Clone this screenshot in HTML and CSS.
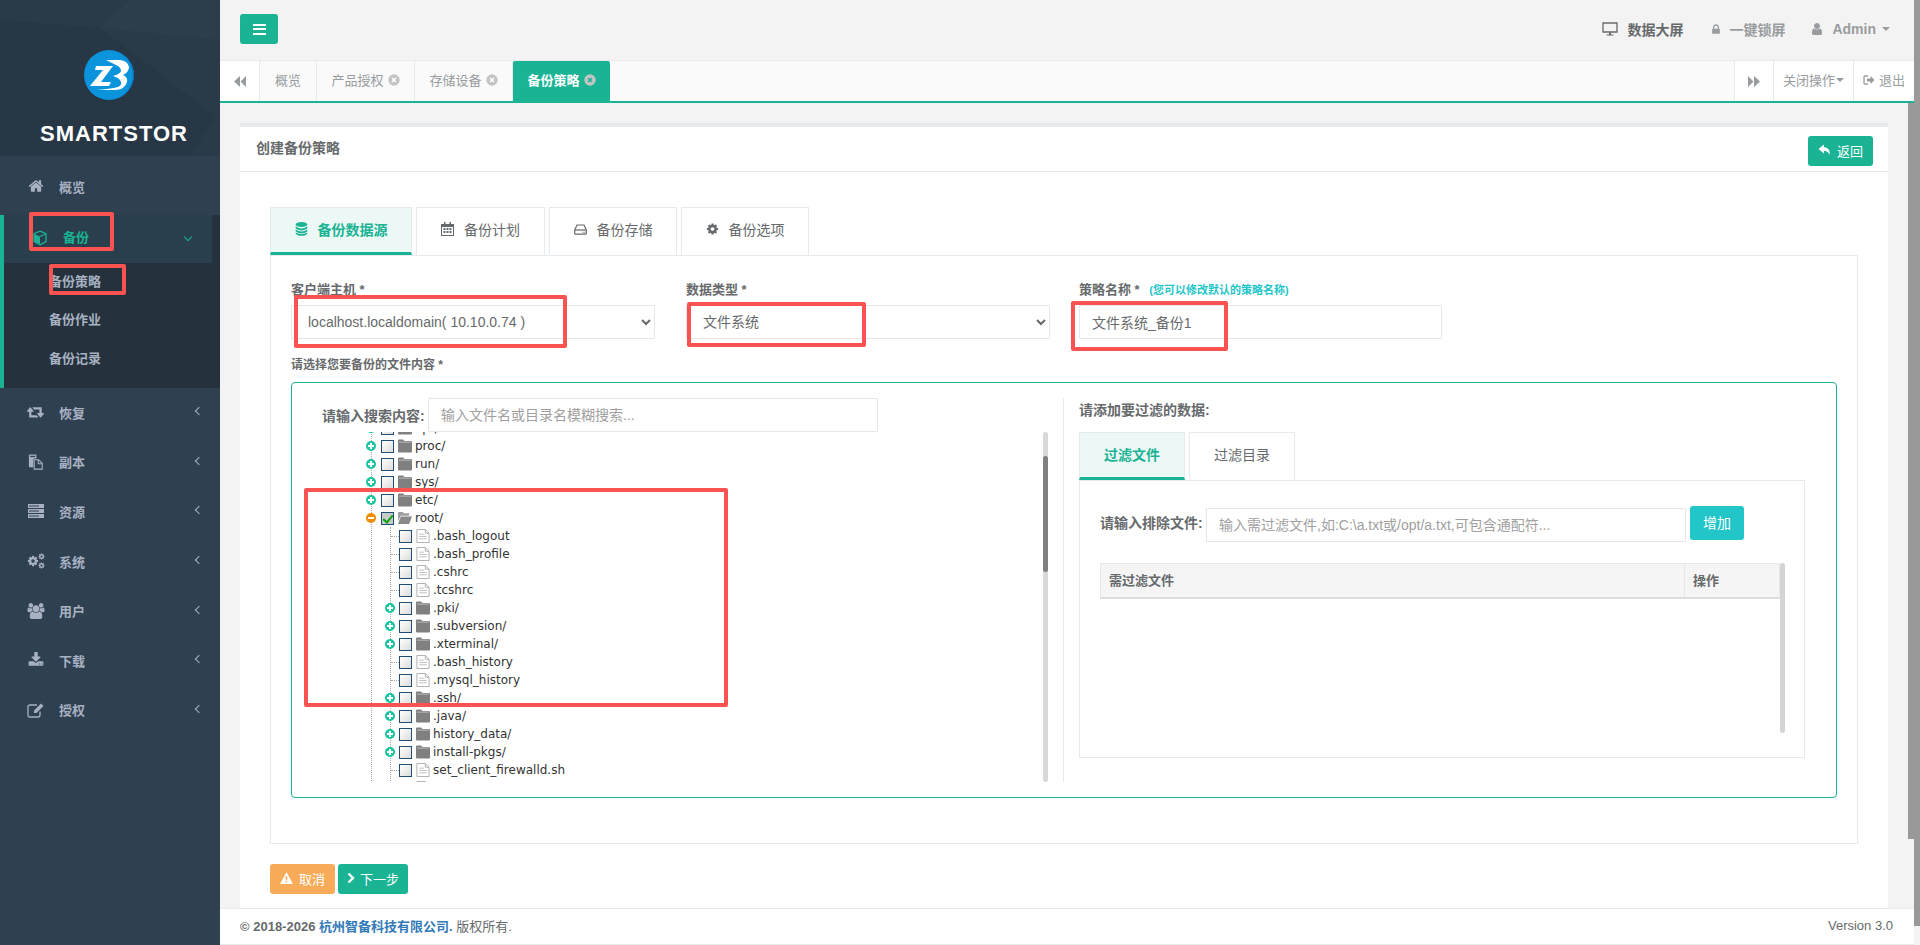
FILE: index.html
```html
<!DOCTYPE html>
<html lang="en">

<head>
    <meta charset="UTF-8">
    <title>SMARTSTOR</title>
    <link rel="stylesheet" href="styles.css">
</head>

<body>
    <!-- Icon sprite -->
    <svg class="sprite">
        <symbol id="i-home" viewBox="0 0 1792 1792"><path d="M1472 992v480q0 26-19 45t-45 19h-384v-384h-256v384h-384q-26 0-45-19t-19-45v-480q0-1 .5-3t.5-3l575-474 575 474q1 2 1 6zm223-69l-62 74q-8 9-21 11h-3q-13 0-21-7l-692-577-692 577q-12 8-24 7-13-2-21-11l-62-74q-8-10-7-23.500t11-21l719-599q32-26 76-26t76 26l244 204v-195q0-14 9-23t23-9h192q14 0 23 9t9 23v408l219 182q10 8 11 21.500t-7 23.500z"/></symbol>
        <symbol id="i-retweet" viewBox="0 0 1920 1792"><path d="M1216 1488q0 13-9.500 22.500t-22.500 9.500h-960q-8 0-13.500-2t-9-7-5.500-8-3-11.500-1-11.500v-600h-192q-26 0-45-19t-19-45q0-24 15-41l320-384q19-22 49-22t49 22l320 384q15 17 15 41 0 26-19 45t-45 19h-192v384h576q16 0 25 11l160 192q7 10 7 21zm640-416q0 24-15 41l-320 384q-20 23-49 23t-49-23l-320-384q-15-17-15-41 0-26 19-45t45-19h192v-384h-576q-16 0-25-12l-160-192q-7-9-7-20 0-13 9.500-22.500t22.500-9.500h960q8 0 13.500 2t9 7 5.500 8 3 11.500 1 11.500v600h192q26 0 45 19t19 45z"/></symbol>
        <symbol id="i-files" viewBox="0 0 18 18"><path d="M1 1.500q0-1 1-1h6.500q1 0 1 1V5H7.500q-1.500 0-1.500 1.500V15H2q-1 0-1-1z"/><path d="M2.500 2h5.500v1.500H2.500z" fill="#2f4050"/><path d="M7 6.500h5l4 4V17H7z" fill="none" stroke="currentColor" stroke-width="1.200"/><path d="M11.500 6.500v4.500H16" fill="none" stroke="currentColor" stroke-width="1.200"/></symbol>
        <symbol id="i-server" viewBox="0 0 18 16"><path d="M1 1h16v4H1zM1 6h16v4H1zM1 11h16v4H1z"/><path d="M2 2.500h10v1H2zM2 7.500h10v1H2zM2 12.500h10v1H2z" fill="#2f4050"/></symbol>
        <symbol id="i-cog" viewBox="0 0 1792 1792"><path d="M1152 896q0-106-75-181t-181-75-181 75-75 181 75 181 181 75 181-75 75-181zm512-109v222q0 12-8 23t-20 13l-185 28q-19 54-39 91 35 50 107 138 10 12 10 25t-9 23q-27 37-99 108t-94 71q-12 0-26-9l-138-108q-44 23-91 38-16 136-29 186-7 28-36 28h-222q-14 0-24.500-8.500t-11.500-21.500l-28-184q-49-16-90-37l-141 107q-10 9-25 9-14 0-25-11-126-114-165-168-7-10-7-23 0-12 8-23 15-21 51-66.500t54-70.500q-27-50-41-99l-183-27q-13-2-21-12.500t-8-23.500v-222q0-12 8-23t19-13l186-28q14-46 39-92-40-57-107-138-10-12-10-24 0-10 9-23 26-36 98.500-107.500t94.500-71.500q13 0 26 10l138 107q44-23 91-38 16-136 29-186 7-28 36-28h222q14 0 24.500 8.500t11.500 21.500l28 184q49 16 90 37l142-107q9-9 24-9 13 0 25 10 129 119 165 170 7 8 7 22 0 12-8 23-15 21-51 66.500t-54 70.500q26 50 41 98l183 28q13 2 21 12.500t8 23.500z"/></symbol>
        <symbol id="i-cogs" viewBox="0 0 18 16"><use href="#i-cog" x="0" y="2" width="12" height="12"/><use href="#i-cog" x="11" y="0" width="7" height="7"/><use href="#i-cog" x="11" y="9" width="7" height="7"/></symbol>
        <symbol id="i-users" viewBox="0 0 1920 1792"><path d="M593 896q-162 5-265 128h-134q-82 0-138-40.500t-56-118.500q0-353 124-353 6 0 43.500 21t97.500 42.500 119 21.500q67 0 133-23-5 37-5 66 0 139 81 256zm1071 637q0 120-73 189.500t-194 69.500h-874q-121 0-194-69.500t-73-189.500q0-53 3.500-103.500t14-109 26.500-108.500 43-97.500 62-81 85.500-53.500 111.500-20q10 0 43 21.500t73 48 107 48 135 21.500 135-21.500 107-48 73-48 43-21.500q61 0 111.500 20t85.500 53.500 62 81 43 97.500 26.500 108.500 14 109 3.500 103.500zm-1024-1277q0 106-75 181t-181 75-181-75-75-181 75-181 181-75 181 75 75 181zm704 384q0 159-112.500 271.500t-271.500 112.500-271.500-112.500-112.500-271.500 112.500-271.500 271.500-112.500 271.500 112.500 112.500 271.500zm576 225q0 78-56 118.500t-138 40.500h-134q-103-123-265-128 81-117 81-256 0-29-5-66 66 23 133 23 59 0 119-21.500t97.500-42.500 43.500-21q124 0 124 353zm-128-609q0 106-75 181t-181 75-181-75-75-181 75-181 181-75 181 75 75 181z"/></symbol>
        <symbol id="i-download" viewBox="0 0 1792 1792"><path d="M1344 1344q0-26-19-45t-45-19-45 19-19 45 19 45 45 19 45-19 19-45zm256 0q0-26-19-45t-45-19-45 19-19 45 19 45 45 19 45-19 19-45zm128-224v320q0 40-28 68t-68 28h-1472q-40 0-68-28t-28-68v-320q0-40 28-68t68-28h465l135 136q58 56 136 56t136-56l136-136h464q40 0 68 28t28 68zm-325-569q17 41-14 70l-448 448q-18 19-45 19t-45-19l-448-448q-31-29-14-70 17-39 59-39h256v-448q0-26 19-45t45-19h256q26 0 45 19t19 45v448h256q42 0 59 39z"/></symbol>
        <symbol id="i-edit" viewBox="0 0 18 16"><path d="M13 9.500v3.500q0 2-2 2H3q-2 0-2-2V5q0-2 2-2h7" fill="none" stroke="currentColor" stroke-width="1.300"/><path d="M7 8.500l7-7 2.500 2.500-7 7H7z"/></symbol>
        <symbol id="i-cube" viewBox="0 0 14 15"><path d="M7 .7l6 2.500v8L7 14.300 1 11.200v-8z" fill="none" stroke="currentColor" stroke-width="1.300"/><path d="M1.500 3.500L7 6v7.500L1.500 11z"/><path d="M7 6l5.500-2.500" stroke="currentColor" stroke-width="1.200"/></symbol>
        <symbol id="i-desktop" viewBox="0 0 16 14"><path d="M1 1h14v9H1z" fill="none" stroke="currentColor" stroke-width="1.300"/><path d="M7 10.500h2v2H7zM4.500 12.500h7v1h-7z"/></symbol>
        <symbol id="i-lock" viewBox="0 0 1792 1792"><path d="M640 768h512v-192q0-106-75-181t-181-75-181 75-75 181v192zm832 96v576q0 40-28 68t-68 28h-960q-40 0-68-28t-28-68v-576q0-40 28-68t68-28h32v-192q0-184 132-316t316-132 316 132 132 316v192h32q40 0 68 28t28 68z"/></symbol>
        <symbol id="i-user" viewBox="0 0 1792 1792"><path d="M1536 1399q0 109-62.500 187t-150.500 78h-854q-88 0-150.500-78t-62.500-187q0-85 8.500-160.500t31.500-152 58.500-131 94-89 134.500-34.500q131 128 313 128t313-128q76 0 134.500 34.500t94 89 58.500 131 31.500 152 8.500 160.500zm-256-887q0 159-112.500 271.500t-271.500 112.500-271.500-112.500-112.500-271.500 112.500-271.500 271.500-112.500 271.500 112.500 112.500 271.500z"/></symbol>
        <symbol id="i-back" viewBox="0 0 12 11"><path d="M6 0v11L0 5.500zM12 0v11L6.500 5.500z"/></symbol>
        <symbol id="i-fwd" viewBox="0 0 12 11"><path d="M0 0v11l5.500-5.500zM6 0v11l6-5.500z"/></symbol>
        <symbol id="i-close" viewBox="0 0 12 12"><circle cx="6" cy="6" r="5.700"/><path d="M4 4l4 4M8 4l-4 4" stroke="var(--close-x, #fff)" stroke-width="1.600"/></symbol>
        <symbol id="i-signout" viewBox="0 0 12 12"><path d="M5 2H2q-1 0-1 1v6q0 1 1 1h3" fill="none" stroke="currentColor" stroke-width="1.300"/><path d="M4 4.500h3.500V2l4 4-4 4V7.500H4z"/></symbol>
        <symbol id="i-reply" viewBox="0 0 13 12"><path d="M6 .5L.5 5 6 9.500V7q4.500-.5 5.500 4.500 1.500-7.500-5.500-8.500z"/></symbol>
        <symbol id="i-db" viewBox="0 0 12 14"><ellipse cx="6" cy="2.500" rx="5.800" ry="2.400"/><path d="M.2 4.300Q3 6.500 6 6.500t5.800-2.200v2.100Q9 8.500 6 8.500T.2 6.400zM.2 7.500Q3 9.500 6 9.500t5.800-2v2.100Q9 11.500 6 11.500T.2 9.600zM.2 10.500Q3 12.300 6 12.300t5.800-1.800v1q-1 2.300-5.800 2.300T.2 11.500z"/></symbol>
        <symbol id="i-calendar" viewBox="0 0 13 14"><path d="M0 2h13v12H0zM1 5v8h11V5z"/><path d="M2.500 6h2v2h-2zM5.500 6h2v2h-2zM8.500 6h2v2h-2zM2.500 9h2v2h-2zM5.500 9h2v2h-2zM8.500 9h2v2h-2zM3 0h1.500v3H3zM8.500 0H10v3H8.500z"/></symbol>
        <symbol id="i-hdd" viewBox="0 0 13 11"><path d="M3 1h7l2.300 5v3.500q0 .7-.7.7H1.400q-.7 0-.7-.7V6z" fill="none" stroke="currentColor" stroke-width="1.200"/><path d="M1 6h11" stroke="currentColor" stroke-width="1.200"/><path d="M8.500 7.800h1v1h-1zM10.300 7.800h1v1h-1z"/></symbol>
        <symbol id="i-warn" viewBox="0 0 14 13"><path d="M7 0l7 13H0zM6 4.500l.3 4.500h1.400L8 4.500zM6.100 10v1.500h1.800V10z" fill-rule="evenodd"/></symbol>
        <symbol id="i-chevron" viewBox="0 0 8 12"><path d="M1.500 1.500L6 6l-4.500 4.500" fill="none" stroke="currentColor" stroke-width="2.400"/></symbol>
        <symbol id="i-folder" viewBox="0 0 14 13"><path d="M0 1q0-1 1-1h4l1.500 1.500H13q1 0 1 1V12q0 1-1 1H1q-1 0-1-1z" fill="#808080"/><path d="M1 2.200h12v.8H1z" fill="#c8c8c8"/></symbol>
        <symbol id="i-folder-open" viewBox="0 0 15 13"><path d="M0 1q0-1 1-1h4l1.500 1.500H12V4H3L0 10z" fill="#a0a0a0"/><path d="M3 5h12l-3 8H0z" fill="#8a8a8a"/></symbol>
        <symbol id="i-doc" viewBox="0 0 14 15"><path d="M.5.500h9l4 4v10H.500z" fill="#fff" stroke="#aaa"/><path d="M9.500.500v4h4" fill="none" stroke="#aaa"/><path d="M3 5.500h5M3 8h8M3 10.500h8" stroke="#bbb"/></symbol>
    </svg>

    <div class="app">
        <!-- Sidebar -->
        <aside class="sidebar">
            <div class="brand">
                <svg class="brand-bg" viewBox="0 0 220 156" preserveAspectRatio="none">
                    <polygon points="0,20 100,28 220,120 220,156 0,156" fill="#273745"/>
                    <polygon points="100,28 130,0 220,0 220,40" fill="#2c3d4c"/>
                    <polygon points="190,156 220,110 220,156" fill="#2a3a49"/>
                </svg>
                <svg class="brand-logo" viewBox="0 0 50 50">
                    <circle cx="25" cy="25" r="25" fill="#0b93dc"/>
                    <path d="M25 0a25 25 0 0 1 0 50 25 25 0 0 0 14-5A25 25 0 0 0 39 5 25 25 0 0 0 25 0z" fill="#0d6bb0"/>
                    <path d="M12 16h17l-12 16h10l-2 4H6l13-16H11z" fill="#fff"/>
                    <path d="M22 10h14q8 1 9 7 0 5-6 8 5 2 4 7-2 7-11 8H12q14-1 22-3 4-2 3-5-1-4-8-6 7-2 8-5 0-4-5-6-4-2-10-5z" fill="#fff"/>
                </svg>
                <div class="brand-name">SMARTSTOR</div>
            </div>
            <nav class="nav">
                <a class="nav-item"><svg class="nav-icon"><use href="#i-home"/></svg><span>概览</span></a>
                <div class="nav-group">
                    <a class="nav-item active"><svg class="nav-icon"><use href="#i-cube"/></svg><span>备份</span><b class="angle down"></b></a>
                    <div class="nav-sub">
                        <a>备份策略</a>
                        <a>备份作业</a>
                        <a>备份记录</a>
                    </div>
                </div>
                <a class="nav-item"><svg class="nav-icon"><use href="#i-retweet"/></svg><span>恢复</span><b class="angle"></b></a>
                <a class="nav-item"><svg class="nav-icon"><use href="#i-files"/></svg><span>副本</span><b class="angle"></b></a>
                <a class="nav-item"><svg class="nav-icon"><use href="#i-server"/></svg><span>资源</span><b class="angle"></b></a>
                <a class="nav-item"><svg class="nav-icon"><use href="#i-cogs"/></svg><span>系统</span><b class="angle"></b></a>
                <a class="nav-item"><svg class="nav-icon"><use href="#i-users"/></svg><span>用户</span><b class="angle"></b></a>
                <a class="nav-item"><svg class="nav-icon"><use href="#i-download"/></svg><span>下载</span><b class="angle"></b></a>
                <a class="nav-item"><svg class="nav-icon"><use href="#i-edit"/></svg><span>授权</span><b class="angle"></b></a>
            </nav>
        </aside>

        <div class="main">
            <!-- Top bar -->
            <header class="topbar">
                <button class="menu-btn"><i></i><i></i><i></i></button>
                <div class="top-links">
                    <a class="top-link strong"><svg class="desk"><use href="#i-desktop"/></svg>数据大屏</a>
                    <a class="top-link"><svg><use href="#i-lock"/></svg>一键锁屏</a>
                    <a class="top-link admin"><svg><use href="#i-user"/></svg>Admin<b class="caret"></b></a>
                </div>
            </header>

            <!-- Page tabs -->
            <div class="pagetabs">
                <a class="pt-arrow"><svg><use href="#i-back"/></svg></a>
                <a class="pt-tab first">概览</a>
                <a class="pt-tab">产品授权<svg class="pt-close"><use href="#i-close"/></svg></a>
                <a class="pt-tab">存储设备<svg class="pt-close"><use href="#i-close"/></svg></a>
                <a class="pt-tab current">备份策略<svg class="pt-close"><use href="#i-close"/></svg></a>
                <div class="pt-space"></div>
                <a class="pt-arrow right"><svg><use href="#i-fwd"/></svg></a>
                <a class="pt-action wide">关闭操作<b class="caret"></b></a>
                <a class="pt-action"><svg class="pt-out"><use href="#i-signout"/></svg>退出</a>
            </div>

            <div class="content">
                <div class="page">
                    <section class="box">
                        <div class="box-head">
                            <h5>创建备份策略</h5>
                            <button class="btn btn-green"><svg class="btn-icon"><use href="#i-reply"/></svg>返回</button>
                        </div>
                        <div class="box-body">
                            <!-- Wizard tabs -->
                            <div class="wiz-tabs">
                                <a class="wiz-tab on"><svg><use href="#i-db"/></svg>备份数据源</a>
                                <a class="wiz-tab"><svg><use href="#i-calendar"/></svg>备份计划</a>
                                <a class="wiz-tab"><svg class="hdd"><use href="#i-hdd"/></svg>备份存储</a>
                                <a class="wiz-tab"><svg><use href="#i-cog"/></svg>备份选项</a>
                            </div>
                            <div class="wiz-pane">
                                <div class="form-row">
                                    <div class="field">
                                        <label>客户端主机 *</label>
                                        <select><option>localhost.localdomain( 10.10.0.74 )</option></select>
                                    </div>
                                    <div class="field">
                                        <label>数据类型 *</label>
                                        <select><option>文件系统</option></select>
                                    </div>
                                    <div class="field name">
                                        <label>策略名称 * <small>(您可以修改默认的策略名称)</small></label>
                                        <input type="text" value="文件系统_备份1">
                                    </div>
                                </div>
                                <label class="files-label">请选择您要备份的文件内容 *</label>

                                <div class="picker">
                                    <div class="picker-left">
                                        <div class="search-row">
                                            <label>请输入搜索内容:</label>
                                            <input type="text" placeholder="输入文件名或目录名模糊搜索...">
                                        </div>
                                        <div class="tree-wrap">
                                            <ul class="tree">
                                                <li class="node"><i class="plus"></i><i class="check"></i><svg class="ico"><use href="#i-folder"/></svg>opt/</li>
                                                <li class="node"><i class="plus"></i><i class="check"></i><svg class="ico"><use href="#i-folder"/></svg>proc/</li>
                                                <li class="node"><i class="plus"></i><i class="check"></i><svg class="ico"><use href="#i-folder"/></svg>run/</li>
                                                <li class="node"><i class="plus"></i><i class="check"></i><svg class="ico"><use href="#i-folder"/></svg>sys/</li>
                                                <li class="node"><i class="plus"></i><i class="check"></i><svg class="ico"><use href="#i-folder"/></svg>etc/</li>
                                                <li class="node"><i class="plus minus"></i><i class="check checked"></i><svg class="ico"><use href="#i-folder-open"/></svg>root/</li>
                                                <li>
                                                    <ul class="tree nested">
                                                        <li class="node"><i class="dots"></i><i class="check"></i><svg class="ico"><use href="#i-doc"/></svg>.bash_logout</li>
                                                        <li class="node"><i class="dots"></i><i class="check"></i><svg class="ico"><use href="#i-doc"/></svg>.bash_profile</li>
                                                        <li class="node"><i class="dots"></i><i class="check"></i><svg class="ico"><use href="#i-doc"/></svg>.cshrc</li>
                                                        <li class="node"><i class="dots"></i><i class="check"></i><svg class="ico"><use href="#i-doc"/></svg>.tcshrc</li>
                                                        <li class="node"><i class="plus"></i><i class="check"></i><svg class="ico"><use href="#i-folder"/></svg>.pki/</li>
                                                        <li class="node"><i class="plus"></i><i class="check"></i><svg class="ico"><use href="#i-folder"/></svg>.subversion/</li>
                                                        <li class="node"><i class="plus"></i><i class="check"></i><svg class="ico"><use href="#i-folder"/></svg>.xterminal/</li>
                                                        <li class="node"><i class="dots"></i><i class="check"></i><svg class="ico"><use href="#i-doc"/></svg>.bash_history</li>
                                                        <li class="node"><i class="dots"></i><i class="check"></i><svg class="ico"><use href="#i-doc"/></svg>.mysql_history</li>
                                                        <li class="node"><i class="plus"></i><i class="check"></i><svg class="ico"><use href="#i-folder"/></svg>.ssh/</li>
                                                        <li class="node"><i class="plus"></i><i class="check"></i><svg class="ico"><use href="#i-folder"/></svg>.java/</li>
                                                        <li class="node"><i class="plus"></i><i class="check"></i><svg class="ico"><use href="#i-folder"/></svg>history_data/</li>
                                                        <li class="node"><i class="plus"></i><i class="check"></i><svg class="ico"><use href="#i-folder"/></svg>install-pkgs/</li>
                                                        <li class="node"><i class="dots"></i><i class="check"></i><svg class="ico"><use href="#i-doc"/></svg>set_client_firewalld.sh</li>
                                                        <li class="node"><i class="dots"></i><i class="check"></i><svg class="ico"><use href="#i-doc"/></svg></li>
                                                    </ul>
                                                </li>
                                            </ul>
                                            <div class="tree-scroll"><div class="tree-thumb"></div></div>
                                        </div>
                                    </div>

                                    <div class="picker-right">
                                        <h6>请添加要过滤的数据:</h6>
                                        <div class="wiz-tabs small">
                                            <a class="wiz-tab on">过滤文件</a>
                                            <a class="wiz-tab">过滤目录</a>
                                        </div>
                                        <div class="filter-pane">
                                            <div class="filter-row">
                                                <label>请输入排除文件:</label>
                                                <input type="text" placeholder="输入需过滤文件,如:C:\a.txt或/opt/a.txt,可包含通配符...">
                                                <button class="btn btn-cyan">增加</button>
                                            </div>
                                            <div class="filter-table">
                                                <div class="ft-head">
                                                    <div class="ft-name">需过滤文件</div>
                                                    <div class="ft-op">操作</div>
                                                </div>
                                                <div class="ft-scroll"></div>
                                            </div>
                                        </div>
                                    </div>
                                </div>
                            </div>
                            <div class="wiz-actions">
                                <button class="btn btn-orange"><svg class="btn-icon"><use href="#i-warn"/></svg>取消</button>
                                <button class="btn btn-green next"><svg class="btn-icon chev"><use href="#i-chevron"/></svg>下一步</button>
                            </div>
                        </div>
                    </section>
                </div>
                <div class="page-scroll"></div>
            </div>

            <!-- Footer -->
            <footer class="footer">
                <div><strong>© 2018-2026 <a>杭州智备科技有限公司.</a></strong> 版权所有.</div>
                <div class="version">Version 3.0</div>
            </footer>
        </div>

        <div class="window-scroll"></div>
    </div>

    <!-- Red annotation boxes drawn over the screenshot -->
    <div class="mark mark-nav"></div>
    <div class="mark mark-sub"></div>
    <div class="mark mark-host"></div>
    <div class="mark mark-type"></div>
    <div class="mark mark-name"></div>
    <div class="mark mark-tree"></div>
</body>

</html>
```

FILE: styles.css
```css
* {
    box-sizing: border-box;
}

html,
body {
    margin: 0;
    height: 945px;
    overflow: hidden;
}

body {
    position: relative;
    font-family: "Liberation Sans", "Noto Sans CJK SC", sans-serif;
    font-size: 13px;
    color: #676a6c;
    background: #f3f3f4;
}

.sprite {
    display: none;
}

svg {
    fill: currentColor;
}

ul {
    list-style: none;
    margin: 0;
    padding: 0;
}

.app {
    display: flex;
    height: 945px;
}

/* Sidebar */
.sidebar {
    width: 220px;
    flex: none;
    background: #2f4050;
}

.brand {
    position: relative;
    height: 156px;
    background: #2a3a49;
    overflow: hidden;
    display: flex;
    flex-direction: column;
    align-items: center;
    padding-top: 50px;
}

.brand-bg {
    position: absolute;
    left: 0;
    top: 0;
    width: 220px;
    height: 156px;
}

.brand-logo {
    position: relative;
    width: 50px;
    height: 50px;
    margin-right: 2px;
}

.brand-name {
    position: relative;
    margin-top: 21px;
    margin-left: 8px;
    font-size: 22px;
    line-height: 26px;
    font-weight: bold;
    letter-spacing: 1px;
    color: #fff;
}

.nav {
    padding-top: 6px;
}

.nav-item {
    display: flex;
    align-items: center;
    height: 49.6px;
    padding: 0 18px 0 27px;
    font-weight: bold;
    color: #a7b1c2;
}

.nav-item span {
    margin-left: 14px;
    margin-top: -1px;
}

.nav-icon {
    width: 18px;
    height: 16px;
    margin-top: -1px;
    flex: none;
}

.nav-item .angle {
    margin-left: auto;
}

.angle {
    width: 6px;
    height: 6px;
    border-left: 1.4px solid #a7b1c2;
    border-bottom: 1.4px solid #a7b1c2;
    transform: rotate(45deg);
    margin-top: -3px;
}

.angle.down {
    transform: rotate(-45deg);
    border-color: #1ab394;
}

.nav-group {
    margin-top: 3.4px;
    border-left: 4px solid #1ab394;
    background: #25313d;
}

.nav-item.active {
    height: 48px;
    padding-left: 29px;
    margin-right: 8px;
    padding-right: 21px;
    color: #1ab394;
    background: #2a3f4d;
}

.nav-item.active .nav-icon {
    width: 14px;
    margin-top: -2px;
    margin-right: 2px;
}

.nav-item.active span {
    margin-top: -4px;
}

.nav-sub {
    height: 125px;
}

.nav-sub a {
    display: block;
    height: 38.5px;
    line-height: 37px;
    padding-left: 45px;
    font-weight: bold;
    color: #a7b1c2;
}

/* Main column */
.main {
    flex: 1;
    min-width: 0;
    display: flex;
    flex-direction: column;
}

.topbar {
    height: 61px;
    flex: none;
    display: flex;
    align-items: flex-start;
    justify-content: space-between;
    padding: 14px 24px 0 20px;
    border-bottom: 1px solid #e7eaec;
}

.menu-btn {
    width: 38px;
    height: 30px;
    padding: 0;
    border: 0;
    border-radius: 3px;
    background: #1ab394;
    display: flex;
    flex-direction: column;
    align-items: center;
    justify-content: center;
    gap: 2.500px;
}

.menu-btn i {
    display: block;
    width: 13px;
    height: 2px;
    background: #fff;
}

.top-links {
    display: flex;
    height: 30px;
    align-items: center;
    font-size: 14px;
    font-weight: bold;
    color: #999c9e;
}

.top-link {
    display: flex;
    align-items: center;
}

.top-link svg {
    width: 12px;
    height: 13px;
    margin-right: 7px;
}

.top-link.strong {
    color: #676a6c;
    margin-right: 27px;
}

.top-link.strong svg {
    width: 16px;
    height: 14px;
    margin-right: 9px;
}

.top-link.admin {
    margin-left: 25px;
}

.top-link.admin svg {
    width: 14px;
    height: 14px;
    margin-right: 8px;
}

.caret {
    display: inline-block;
    margin-left: 6px;
    border-top: 4px solid currentColor;
    border-left: 4px solid transparent;
    border-right: 4px solid transparent;
}

/* Page tabs */
.pagetabs {
    height: 42px;
    flex: none;
    display: flex;
    background: #fafafa;
    border-bottom: 2px solid #1ab394;
    color: #999c9e;
}

.pagetabs a {
    display: flex;
    align-items: center;
    justify-content: center;
    height: 40px;
    padding-bottom: 3px;
}

.pt-arrow {
    width: 40px;
    background: #fff;
    border-right: 1px solid #e7eaec;
}

.pagetabs .pt-arrow {
    padding-bottom: 0;
}

.pt-arrow.right {
    border-left: 1px solid #e7eaec;
    width: 40px;
}

.pt-arrow svg {
    width: 12px;
    height: 11px;
}

.pt-tab {
    width: 98px;
    border-right: 1px solid #e7eaec;
}

.pt-tab.first {
    width: 57px;
}

.pt-tab.current {
    --close-x: #1ab394;
    width: 97px;
    background: #1ab394;
    color: #fff;
    font-weight: bold;
    border: 0;
    border-radius: 2px 2px 0 0;
}

.pt-close {
    width: 12px;
    height: 12px;
    margin-left: 4px;
    color: #c4c4c4;
}

.pt-space {
    flex: 1;
}

.pt-action {
    width: 60px;
    background: #fff;
}

.pt-action.wide {
    width: 80px;
    border-right: 1px solid #e7eaec;
}

.pt-action .caret {
    margin-left: 1px;
}

.pt-out {
    width: 12px;
    height: 12px;
    margin-right: 4px;
}

/* Content */
.content {
    flex: 1;
    min-height: 0;
    display: flex;
}

.page {
    flex: 1;
    min-width: 0;
    padding: 20px 20px 0;
}

.page-scroll {
    width: 6px;
    height: 736px;
    background: #999;
}

.window-scroll {
    width: 6px;
    height: 926px;
    flex: none;
    background: #999;
}

.box {
    height: 785px;
    background: #fff;
    border-top: 4px solid #e7eaec;
}

.box-head {
    height: 45px;
    display: flex;
    align-items: flex-start;
    justify-content: space-between;
    padding: 9px 15px 0 16px;
    border-bottom: 1px solid #e7eaec;
}

.box-head h5 {
    margin: 3px 0 0;
    font-size: 14px;
    line-height: 18px;
    font-weight: bold;
    color: #676a6c;
}

.box-body {
    padding: 35px 30px 0 30px;
}

.btn {
    height: 30px;
    padding: 0 0 2px;
    border: 0;
    border-radius: 3px;
    color: #fff;
    font: inherit;
    display: inline-flex;
    align-items: center;
    justify-content: center;
}

.btn-green {
    width: 65px;
    background: #1ab394;
}

.btn-orange {
    width: 65px;
    background: #f8ac59;
}

.btn-cyan {
    width: 54px;
    height: 34px;
    background: #23c6c8;
    font-size: 14px;
    margin-left: 4px;
    margin-top: -2px;
}

.btn-icon {
    width: 13px;
    height: 12px;
    margin-right: 6px;
}

.btn-icon.chev {
    width: 8px;
    margin-right: 5px;
}

.btn.next {
    width: 70px;
}

/* Tabs inside the form */
.wiz-tabs {
    display: flex;
    gap: 4px;
    height: 48px;
}

.wiz-tab {
    width: 129px;
    display: flex;
    align-items: center;
    justify-content: center;
    padding-bottom: 5px;
    border: 1px solid #e7eaec;
    border-bottom: 0;
    font-size: 14px;
    color: #676a6c;
}

.wiz-tab:nth-child(3) {
    width: 128px;
}

.wiz-tab:nth-child(4) {
    width: 128px;
}

.wiz-tab svg {
    width: 13px;
    height: 14px;
    margin-right: 10px;
}

.wiz-tab svg.hdd {
    height: 11px;
}

.wiz-tab.on {
    width: 142px;
    padding-bottom: 2px;
    background: #ecf8f6;
    color: #1ab394;
    font-weight: bold;
    border-bottom: 3px solid #1ab394;
}

.wiz-pane {
    height: 589px;
    border: 1px solid #e7eaec;
    padding: 24px 19px 0 20px;
}

.form-row {
    display: flex;
}

.field {
    width: 364px;
    margin-right: 31px;
}

.field.name {
    width: 363px;
    margin-left: -2px;
    margin-right: 0;
}

.field label,
.files-label {
    display: block;
    height: 18px;
    line-height: 18px;
    margin-bottom: 7px;
    font-size: 13px;
    font-weight: bold;
    color: #676a6c;
    white-space: nowrap;
}

.field label {
    padding-top: 1px;
}

.field small {
    margin-left: 6px;
    font-size: 11px;
    color: #23c6c8;
}

.field select,
.field input,
.search-row input,
.filter-row input {
    display: block;
    height: 34px;
    border: 1px solid #e5e6e7;
    border-radius: 1px;
    background: #fff;
    padding: 6px 12px;
    font: inherit;
    font-size: 14px;
    color: #676a6c;
    outline: none;
}

.field select,
.field input {
    width: 100%;
}

input::placeholder {
    color: #a0a0a0;
}

.files-label {
    margin-top: 17px;
    margin-bottom: 8px;
    font-size: 12px;
}

/* Green box with file tree and filter */
.picker {
    display: flex;
    height: 416px;
    width: 1546px;
    padding: 15px 0;
    border: 1px solid #1ab394;
    border-radius: 4px;
}

.picker-left {
    width: 772px;
    flex: none;
    border-right: 1px solid #e7eaec;
}

.search-row {
    display: flex;
    align-items: center;
    height: 34px;
    padding-left: 30px;
}

.search-row label {
    width: 106px;
    font-size: 14px;
    font-weight: bold;
    white-space: nowrap;
}

.search-row input {
    width: 450px;
    font-size: 14px;
}

.tree-wrap {
    position: relative;
    height: 350px;
    overflow: hidden;
}

.tree {
    margin: -13px 0 0 79px;
    border-left: 1px dotted #aaa;
    font-family: "DejaVu Sans", sans-serif;
    font-size: 12px;
    color: #333;
}

.tree.nested {
    margin: 0 0 0 18px;
}

.node {
    display: flex;
    align-items: center;
    height: 18px;
    margin-left: -6px;
    white-space: nowrap;
}

.plus,
.dots {
    position: relative;
    width: 10px;
    height: 10px;
    flex: none;
    margin-right: 5px;
}

.nested .plus,
.nested .dots {
    margin-right: 4px;
}

.plus {
    border-radius: 50%;
    background: #1ac59f;
}

.plus::before,
.plus::after {
    content: "";
    position: absolute;
    background: #fff;
}

.plus::before {
    left: 2px;
    top: 4px;
    width: 6px;
    height: 2px;
}

.plus::after {
    left: 4px;
    top: 2px;
    width: 2px;
    height: 6px;
}

.plus.minus {
    background: #f08c00;
}

.plus.minus::after {
    display: none;
}

.dots::before {
    content: "";
    position: absolute;
    left: 6px;
    right: -4px;
    top: 5px;
    border-top: 1px dotted #aaa;
}

.check {
    position: relative;
    width: 13px;
    height: 13px;
    flex: none;
    margin-right: 4px;
    border: 1px solid #1f4e79;
    background: linear-gradient(135deg, #fff, #dcdcd8);
}

.check.checked {
    background: #c8ccc8;
}

.check.checked::after {
    content: "";
    position: absolute;
    left: 3px;
    top: 0;
    width: 4px;
    height: 8px;
    border-right: 2px solid #14a014;
    border-bottom: 2px solid #14a014;
    transform: rotate(40deg);
}

.ico {
    width: 14px;
    height: 14px;
    flex: none;
    margin-right: 3px;
}

.tree-scroll {
    position: absolute;
    top: 0;
    right: 15px;
    width: 5px;
    height: 350px;
    border-radius: 3px;
    background: #d8d8d8;
}

.tree-thumb {
    height: 116px;
    margin-top: 24px;
    border-radius: 3px;
    background: #808080;
}

.picker-right {
    padding-left: 15px;
    width: 741px;
}

.picker-right h6 {
    margin: 0;
    height: 34px;
    line-height: 24px;
    font-size: 14px;
    font-weight: bold;
    color: #676a6c;
}

.wiz-tabs.small .wiz-tab {
    width: 106px;
}

.filter-pane {
    height: 278px;
    border: 1px solid #e7eaec;
    padding: 27px 20px 0;
}

.filter-row {
    display: flex;
    align-items: flex-start;
    height: 55px;
}

.filter-row label {
    width: 106px;
    line-height: 30px;
    font-size: 14px;
    font-weight: bold;
    white-space: nowrap;
}

.filter-row input {
    width: 480px;
    font-size: 14px;
}

.filter-table {
    position: relative;
    width: 685px;
}

.ft-head {
    display: flex;
    width: 680px;
    height: 36px;
    line-height: 33px;
    font-size: 13px;
    font-weight: bold;
    background: #f5f5f6;
    border: 1px solid #e7e7e7;
    border-bottom: 2px solid #ddd;
}

.ft-name {
    width: 584px;
    padding-left: 8px;
    border-right: 1px solid #e7e7e7;
}

.ft-op {
    padding-left: 8px;
}

.ft-scroll {
    position: absolute;
    right: 0;
    top: 0;
    width: 5px;
    height: 170px;
    border-radius: 3px;
    background: #d4d4d4;
}

.wiz-actions {
    display: flex;
    gap: 3px;
    margin-top: 20px;
}

/* Footer */
.footer {
    height: 37px;
    flex: none;
    display: flex;
    align-items: center;
    justify-content: space-between;
    padding: 0 21px 2px 20px;
    background: #fff;
    border-top: 1px solid #e7eaec;
    border-bottom: 1px solid #e7eaec;
    font-size: 13px;
}

.footer a {
    color: #337ab7;
}

/* Annotations */
.mark {
    position: absolute;
    border: 4px solid #fb5252;
    border-radius: 2px;
}

.mark-nav {
    left: 29px;
    top: 212px;
    width: 85px;
    height: 39px;
}

.mark-sub {
    left: 49px;
    top: 264px;
    width: 77px;
    height: 31px;
}

.mark-host {
    left: 294px;
    top: 295px;
    width: 273px;
    height: 53px;
}

.mark-type {
    left: 687px;
    top: 302px;
    width: 179px;
    height: 45px;
}

.mark-name {
    left: 1071px;
    top: 301px;
    width: 157px;
    height: 50px;
}

.mark-tree {
    left: 304px;
    top: 488px;
    width: 424px;
    height: 219px;
}
```
